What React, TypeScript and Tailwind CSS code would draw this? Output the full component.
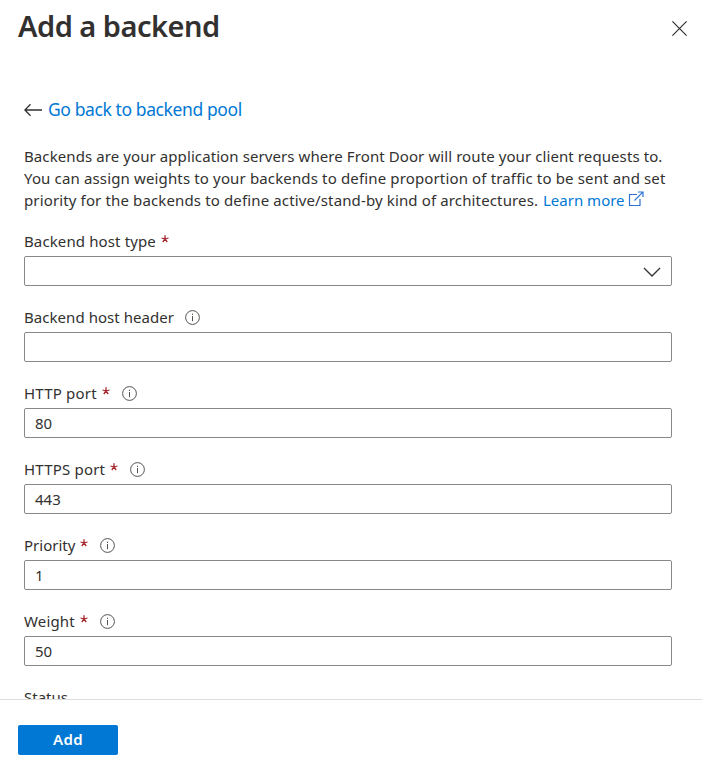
import React from 'react';

function Info() {
  return (
    <svg width="15" height="15" viewBox="0 0 15 15" fill="none" stroke="#55534f" className="block shrink-0">
      <circle cx="7.5" cy="7.5" r="6.9" />
      <path d="M7.5 6v5.2M7.5 3.7v1.3" />
    </svg>
  );
}

function Star() {
  return (
    <svg width="8" height="8" viewBox="0 0 8 8" fill="none" stroke="#a4262c" strokeWidth="1.3" className="mb-[5px] shrink-0">
      <path d="M4 .3V4M.5 3L4 4M7.5 3L4 4M1.8 7L4 4M6.2 7L4 4" />
    </svg>
  );
}

type FieldProps = { label: string; width: string; value?: string; required?: boolean; info?: boolean; select?: boolean };

function Field({ label, width, value, required, info, select }: FieldProps) {
  return (
    <div className="mb-[13px] h-[63px]">
      <div className="flex h-[33px] items-center pt-[3px]">
        <span className={'whitespace-nowrap ' + width}>{label}</span>
        {required && <span className="ml-[5px]"><Star /></span>}
        {info && <span className={required ? 'ml-3' : 'ml-[11px]'}><Info /></span>}
      </div>
      <div className="flex h-[30px] items-center justify-between rounded-[2px] border border-[#8a8886] px-[10px]">
        <span>{value}</span>
        {select && (
          <svg className="mt-[2px]" width="18" height="10" viewBox="0 0 18 10" fill="none" stroke="#323130" strokeWidth="1.3">
            <path d="M1 1l8 8 8-8" />
          </svg>
        )}
      </div>
    </div>
  );
}

export default function App() {
  return (
    <div className="flex h-[763px] w-[702px] flex-col overflow-hidden bg-white font-['Segoe_UI','Noto_Sans',sans-serif] text-[15px] text-[#323130]">
      <header className="flex h-[97px] justify-between pt-[6px] pr-[15px] pl-[18px]">
        <h1 className="text-[29px] leading-[40px] font-semibold tracking-[-0.5px]">Add a backend</h1>
        <svg className="mt-[15px]" width="15" height="15" viewBox="0 0 15 15" stroke="#323130" strokeWidth="1.2">
          <path d="M.4 .4l14.2 14.2M14.6 .4L.4 14.6" />
        </svg>
      </header>
      <main className="h-[602px] overflow-hidden pr-[30px] pl-6">
        <a className="flex h-6 items-center gap-[5px] text-[17.5px] tracking-[-0.4px] text-[#0078d4]">
          <svg className="mt-[2px]" width="19" height="14" viewBox="0 0 19 14" fill="none" stroke="#323130" strokeWidth="1.3">
            <path d="M18 7H1M6.5 1.2L.9 7l5.6 5.8" />
          </svg>
          Go back to backend pool
        </a>
        <div className="mt-[24px] mb-[12px] leading-[22px] whitespace-nowrap">
          <p className="tracking-[0.09px]">Backends are your application servers where Front Door will route your client requests to.</p>
          <p className="tracking-[0.145px]">You can assign weights to your backends to define proportion of traffic to be sent and set</p>
          <p className="flex">
            <span className="w-[519px] tracking-[0.135px]">priority for the backends to define active/stand-by kind of architectures.</span>
            <a className="flex text-[#0078d4]">
              Learn more
              <svg className="mt-[2px] ml-[3px]" width="16" height="16" viewBox="0 0 16 16" fill="none" stroke="#2f74d0" strokeWidth="1.2">
                <path d="M9 3.5H1.5v11h10.5V8M6.5 9.5L14.8 1.2M10 1h5v5" />
              </svg>
            </a>
          </p>
        </div>
        <Field label="Backend host type" width="w-[132px] tracking-[0.12px]" required select />
        <Field label="Backend host header" width="w-[150px] tracking-[0.05px]" info />
        <Field label="HTTP port" width="w-[73px] tracking-[0.2px]" value="80" required info />
        <Field label="HTTPS port" width="w-[81px] tracking-[0.2px]" value="443" required info />
        <Field label="Priority" width="w-[51px]" value="1" required info />
        <Field label="Weight" width="w-[51px] tracking-[0.15px]" value="50" required info />
        <div className="flex h-[33px] items-center pt-[3px]">Status</div>
      </main>
      <footer className="flex h-16 items-start border-t border-[#dddddd] px-[18px] pt-[25px]">
        <button className="h-[30px] w-[100px] rounded-[2px] bg-[#0078d4] pb-[2px] font-semibold tracking-[0.4px] text-white">Add</button>
      </footer>
    </div>
  );
}
